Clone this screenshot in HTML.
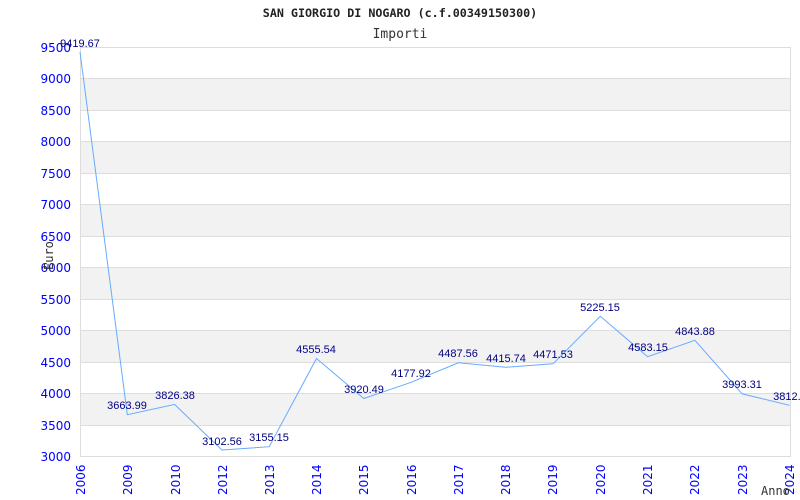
<!DOCTYPE html><html><head><style>body{margin:0;background:#fff}svg{display:block}</style></head><body>
<svg width="800" height="500" xmlns="http://www.w3.org/2000/svg">
<rect width="800" height="500" fill="#fff"/>
<g fill="#f2f2f2">
<rect x="80" y="78.5" width="710" height="31.5"/><rect x="80" y="141.5" width="710" height="31.5"/><rect x="80" y="204.5" width="710" height="31.5"/><rect x="80" y="267.5" width="710" height="31.5"/><rect x="80" y="330.5" width="710" height="31.5"/><rect x="80" y="393.5" width="710" height="31.5"/>
</g>
<g stroke="#ddd" stroke-width="1">
<line x1="80" x2="790" y1="47.5" y2="47.5"/><line x1="80" x2="790" y1="78.5" y2="78.5"/><line x1="80" x2="790" y1="110.5" y2="110.5"/><line x1="80" x2="790" y1="141.5" y2="141.5"/><line x1="80" x2="790" y1="173.5" y2="173.5"/><line x1="80" x2="790" y1="204.5" y2="204.5"/><line x1="80" x2="790" y1="236.5" y2="236.5"/><line x1="80" x2="790" y1="267.5" y2="267.5"/><line x1="80" x2="790" y1="299.5" y2="299.5"/><line x1="80" x2="790" y1="330.5" y2="330.5"/><line x1="80" x2="790" y1="362.5" y2="362.5"/><line x1="80" x2="790" y1="393.5" y2="393.5"/><line x1="80" x2="790" y1="425.5" y2="425.5"/><line x1="80" x2="790" y1="456.5" y2="456.5"/>
<line x1="80.5" x2="80.5" y1="47" y2="457"/><line x1="790.5" x2="790.5" y1="47" y2="457"/>
</g>
<text x="400" y="17" text-anchor="middle" font-family="DejaVu Sans Mono, Liberation Mono, monospace" font-size="11.7" font-weight="bold" fill="#222">SAN GIORGIO DI NOGARO (c.f.00349150300)</text>
<text x="400" y="38" text-anchor="middle" font-family="DejaVu Sans Mono, Liberation Mono, monospace" font-size="13" fill="#333">Importi</text>
<g font-family="DejaVu Sans, sans-serif" font-size="12" fill="#00f" text-anchor="end">
<text x="71" y="52">9500</text><text x="71" y="83">9000</text><text x="71" y="115">8500</text><text x="71" y="146">8000</text><text x="71" y="178">7500</text><text x="71" y="209">7000</text><text x="71" y="241">6500</text><text x="71" y="272">6000</text><text x="71" y="304">5500</text><text x="71" y="335">5000</text><text x="71" y="367">4500</text><text x="71" y="398">4000</text><text x="71" y="430">3500</text><text x="71" y="461">3000</text>
</g>
<g font-family="DejaVu Sans, sans-serif" font-size="12" fill="#00f">
<text transform="translate(85,495) rotate(-90)">2006</text>
<text transform="translate(132,495) rotate(-90)">2009</text>
<text transform="translate(180,495) rotate(-90)">2010</text>
<text transform="translate(227,495) rotate(-90)">2012</text>
<text transform="translate(274,495) rotate(-90)">2013</text>
<text transform="translate(321,495) rotate(-90)">2014</text>
<text transform="translate(368,495) rotate(-90)">2015</text>
<text transform="translate(416,495) rotate(-90)">2016</text>
<text transform="translate(463,495) rotate(-90)">2017</text>
<text transform="translate(510,495) rotate(-90)">2018</text>
<text transform="translate(557,495) rotate(-90)">2019</text>
<text transform="translate(605,495) rotate(-90)">2020</text>
<text transform="translate(652,495) rotate(-90)">2021</text>
<text transform="translate(699,495) rotate(-90)">2022</text>
<text transform="translate(747,495) rotate(-90)">2023</text>
<text transform="translate(794,495) rotate(-90)">2024</text>
</g>
<text transform="translate(53,270) rotate(-90)" font-family="DejaVu Sans Mono, monospace" font-size="12" fill="#333">Euro</text>
<text x="761" y="495" font-family="DejaVu Sans Mono, monospace" font-size="12" fill="#333">Anno</text>
<polyline fill="none" stroke="#6af" stroke-width="1" points="80,52.1 127.3,414.7 174.6,404.4 221.9,450 269.2,446.7 316.5,358.5 363.8,398.5 411.1,382.3 458.4,362.8 505.7,367.3 553,363.8 600.3,316.3 647.6,356.7 694.9,340.3 742.2,393.9 789.5,405.3"/>
<g font-family="Liberation Sans, Arial, sans-serif" font-size="11" fill="#000080" text-anchor="middle">
<text x="80" y="47">9419.67</text><text x="127" y="409">3663.99</text><text x="175" y="399">3826.38</text><text x="222" y="445">3102.56</text><text x="269" y="441">3155.15</text><text x="316" y="353">4555.54</text><text x="364" y="393">3920.49</text><text x="411" y="377">4177.92</text><text x="458" y="357">4487.56</text><text x="506" y="362">4415.74</text><text x="553" y="358">4471.53</text><text x="600" y="311">5225.15</text><text x="648" y="351">4583.15</text><text x="695" y="335">4843.88</text><text x="742" y="388">3993.31</text><text x="790" y="400">3812.3</text>
</g>
</svg>
</body></html>
